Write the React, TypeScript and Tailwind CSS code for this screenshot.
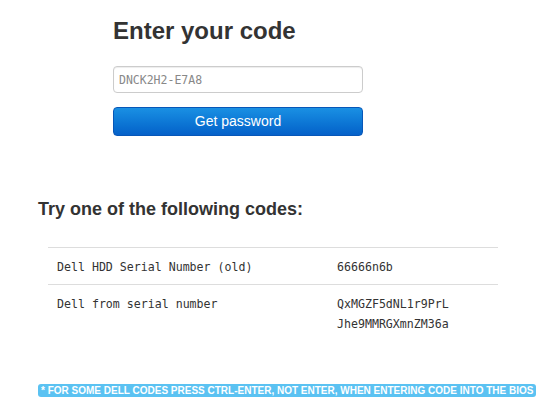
export default function App() {
  const codes = [
    { type: "Dell HDD Serial Number (old)", values: ["66666n6b"] },
    { type: "Dell from serial number", values: ["QxMGZF5dNL1r9PrL", "Jhe9MMRGXmnZM36a"] },
  ];

  return (
    <div className="min-h-[407px] bg-white text-[#333] font-['Liberation_Sans',Arial,sans-serif]">
      {/* Code form */}
      <div className="ml-[113px] w-[250px] pt-[17px]">
        <h2 className="text-[24px] leading-[28px] font-bold">Enter your code</h2>
        <input
          type="text"
          placeholder="DNCK2H2-E7A8"
          className="mt-[21px] block h-[27px] w-full rounded-[4px] border border-[#ccc] px-[5px] text-[11.5px] font-['DejaVu_Sans_Mono',monospace] text-[#555] shadow-[inset_0_1px_1px_rgba(0,0,0,0.075)] placeholder:text-[#888] outline-none"
        />
        <button className="mt-[14px] block h-[29px] w-full rounded-[4px] border border-[#0757b8] bg-gradient-to-b from-[#1a90e3] to-[#0661c9] text-[14px] text-white">
          Get password
        </button>
      </div>

      {/* Results */}
      <div className="ml-[38px] mt-[62px]">
        <h3 className="text-[18px] leading-[22px] font-bold">Try one of the following codes:</h3>
        <table className="ml-[10px] mt-[27px] w-[450px] border-collapse font-['DejaVu_Sans_Mono',monospace] text-[11.6px] leading-[20px] text-[#333]">
          <tbody>
            {codes.map((c) => (
              <tr key={c.type} className="border-t border-[#ddd] align-top">
                <td className="w-[281px] p-[8px] pt-[9px] pb-[7px] pl-[9px]">{c.type}</td>
                <td className="p-[8px] pt-[9px] pb-[7px]">
                  {c.values.map((v) => (
                    <div key={v}>{v}</div>
                  ))}
                </td>
              </tr>
            ))}
          </tbody>
        </table>
      </div>

      {/* Note */}
      <div className="ml-[38px] mt-[36px]">
        <span className="inline-block whitespace-nowrap rounded-[3px] bg-[#5bc2f2] px-[3px] text-[10px] leading-[13px] font-bold text-white">
          * FOR SOME DELL CODES PRESS CTRL-ENTER, NOT ENTER, WHEN ENTERING CODE INTO THE BIOS
        </span>
      </div>
    </div>
  );
}
